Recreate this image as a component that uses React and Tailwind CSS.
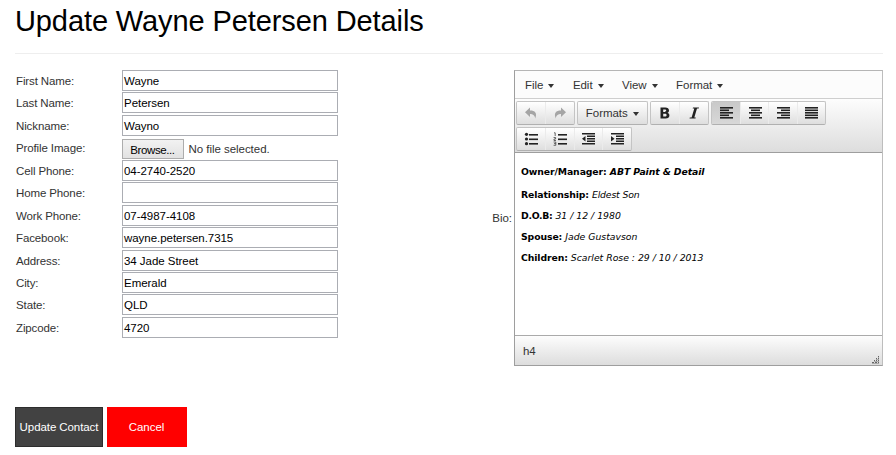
import React from "react";

const fields = [
  ["First Name:", "Wayne"],
  ["Last Name:", "Petersen"],
  ["Nickname:", "Wayno"],
  ["Profile Image:", null],
  ["Cell Phone:", "04-2740-2520"],
  ["Home Phone:", ""],
  ["Work Phone:", "07-4987-4108"],
  ["Facebook:", "wayne.petersen.7315"],
  ["Address:", "34 Jade Street"],
  ["City:", "Emerald"],
  ["State:", "QLD"],
  ["Zipcode:", "4720"],
];

function Field({ label, value }) {
  return (
    <div className="flex h-[22.45px] items-start">
      <div className="w-[106.500px] pl-px leading-[22px] tracking-[-0.12px] text-[#333]">{label}</div>
      {value === null ? (
        <div className="flex items-center pt-px">
          <button className="h-[20px] w-[62px] border border-[#adadad] bg-linear-to-b from-[#f2f2f2] to-[#e2e2e2] text-black leading-[20px] tracking-[-0.4px]">
            Browse...
          </button>
          <span className="ml-[5px] leading-[22px] text-[#333]">No file selected.</span>
        </div>
      ) : (
        <div className="h-[21px] w-[216.500px] whitespace-nowrap border border-[#abadb3] bg-white pl-[1.500px] leading-[21px] text-black">
          {value}
        </div>
      )}
    </div>
  );
}

function Caret() {
  return <span className="h-0 w-0 border-x-[3.500px] border-t-[4px] border-x-transparent border-t-[#333]" />;
}

function Group({ children }) {
  return (
    <div className="flex h-[24px] overflow-hidden rounded-[2px] border border-[#c4c4c4] border-b-[#b0b0b0] bg-linear-to-b from-white to-[#dedede]">
      {children}
    </div>
  );
}

function Tool({ children, active, first }) {
  return (
    <div
      className={
        "flex w-[28.400px] items-center justify-center " +
        (active ? "bg-linear-to-b from-[#c9c9c9] to-[#d8d8d8]" : first ? "" : "border-l border-[#ebebeb]")
      }
    >
      <svg width="14" height="14" viewBox="0 0 14 14" fill="none">
        {children}
      </svg>
    </div>
  );
}

function Lines({ rows }) {
  return rows.map(([x, w], i) => (
    <rect key={i} x={x} y={1 + i * 2.5} width={w} height="1.6" fill="#222" />
  ));
}

function ListLines() {
  return [2, 6.5, 11].map((y) => <rect key={y} x="5" y={y} width="9" height="1.6" fill="#222" />);
}

function IndentLines() {
  return (
    <path d="M1 1h13v1.600H1zM6 3.500h8v1.600H6zM6 6h8v1.600H6zM6 8.500h8v1.600H6zM1 11h13v1.600H1z" fill="#222" />
  );
}

export default function App() {
  return (
    <div className="h-[455px] w-[896px] overflow-hidden bg-white pl-[15px] pr-[13px] font-['Liberation_Sans',Arial,sans-serif] text-[11.5px] tracking-[-0.04px]">
      <h1 className="h-[53px] whitespace-nowrap pt-[3px] text-[29px] leading-[36px] tracking-[-0.1px] text-black">
        Update Wayne Petersen Details
      </h1>
      <div className="h-px bg-[#eee]" />
      <div className="mt-[16px] flex h-[296px] justify-between">
        <div>
          {fields.map(([label, value]) => (
            <Field key={label} label={label} value={value} />
          ))}
        </div>
        <div className="flex items-center">
          <div className="mr-[2px] pt-[2px] text-[#333]">Bio:</div>
          <div className="flex h-[296px] w-[369px] flex-col border border-[#9e9e9e] border-r-[#bdbdbd] border-t-[#b5b5b5] text-[#333]">
            <div className="flex h-[28px] items-center gap-[18.500px] border-b border-[#cfcfcf] bg-[#fcfcfc] pl-[10px] pt-[2px]">
              {["File", "Edit", "View", "Format"].map((m) => (
                <div key={m} className="flex items-center gap-[5px]">
                  {m}
                  <Caret />
                </div>
              ))}
            </div>
            <div className="h-[54px] border-b border-[#9e9e9e] bg-linear-to-b from-[#fdfdfd] to-[#dddddd] pl-[1px] pt-[2px]">
              <div className="flex gap-[2px]">
                <Group>
                  <Tool first>
                    <path d="M6 1.500v3c5 0 7.500 2.500 5.200 8C10.800 9 8.500 8.100 6 8.100V11L1 6.300z" fill="#a5a5a5" />
                  </Tool>
                  <Tool>
                    <path d="M8 1.500v3C3 4.500.5 7 2.800 12.500 3.200 9 5.500 8.100 8 8.100V11l5-4.700z" fill="#a5a5a5" />
                  </Tool>
                </Group>
                <Group>
                  <div className="flex w-[69px] items-center justify-center gap-[5px] pt-px">
                    Formats
                    <Caret />
                  </div>
                </Group>
                <Group>
                  <Tool first>
                    <path d="M2.500 1.500h4.800c2.300 0 3.700 1.100 3.700 2.900 0 1.200-.6 2-1.500 2.400 1.200.4 1.900 1.300 1.900 2.700 0 2-1.400 3-3.900 3h-5zM5.200 3.400v2.500h1.500c1 0 1.500-.4 1.500-1.200 0-.9-.5-1.300-1.500-1.300zM5.200 7.800v2.800h1.700c1.100 0 1.700-.5 1.700-1.400s-.6-1.400-1.700-1.400z" fill="#222" fillRule="evenodd" />
                  </Tool>
                  <Tool>
                    <path d="M6 1.500h6l-.3 1H10L7.300 11.500h1.500l-.3 1h-6l.3-1h1.800L7.300 2.500H5.700z" fill="#222" />
                  </Tool>
                </Group>
                <Group>
                  <Tool first active><Lines rows={[[1, 13], [1, 9], [1, 13], [1, 9], [1, 13]]} /></Tool>
                  <Tool><Lines rows={[[1, 13], [3, 9], [1, 13], [3, 9], [1, 13]]} /></Tool>
                  <Tool><Lines rows={[[1, 13], [5, 9], [1, 13], [5, 9], [1, 13]]} /></Tool>
                  <Tool><Lines rows={[[1, 13], [1, 13], [1, 13], [1, 13], [1, 13]]} /></Tool>
                </Group>
              </div>
              <div className="mt-[2px] flex">
                <Group>
                  <Tool first>
                    {[2.3, 7, 11.7].map((y) => <circle key={y} cx="2.500" cy={y} r="1.6" fill="#222" />)}
                    <ListLines />
                  </Tool>
                  <Tool>
                    <path d="M1 .8h1.200V4M.6 5.500h2V7h-1.600v1.500h2M.6 10h2.200v3.300H.6M1 11.600h1.800" stroke="#444" strokeWidth=".8" />
                    <ListLines />
                  </Tool>
                  <Tool>
                    <IndentLines />
                    <path d="M4.500 4v5.600L1 6.800z" fill="#222" />
                  </Tool>
                  <Tool>
                    <IndentLines />
                    <path d="M1 4v5.600l3.500-2.800z" fill="#222" />
                  </Tool>
                </Group>
              </div>
            </div>
            <div className="flex-1 whitespace-nowrap bg-white pl-[6px] pt-[8px] font-['DejaVu_Sans',Verdana,sans-serif] text-[9.3px] leading-[21px] tracking-[0px] text-black">
              <div className="h-[23px] font-bold tracking-[-0.1px]">Owner/Manager: <i>ABT Paint &amp; Detail</i></div>
              <div><b className="tracking-[-0.1px]">Relationship:</b> <i className="tracking-[-0.15px]">Eldest Son</i></div>
              <div><b className="tracking-[-0.3px]">D.O.B:</b> <i>31 / 12 / 1980</i></div>
              <div><b className="tracking-[-0.1px]">Spouse:</b> <i>Jade Gustavson</i></div>
              <div><b className="tracking-[-0.1px]">Children:</b> <i>Scarlet Rose : 29 / 10 / 2013</i></div>
            </div>
            <div className="flex h-[30px] items-end justify-between border-t border-[#aaa] bg-linear-to-b from-[#fdfdfd] to-[#dddddd] pl-[8px]">
              <span className="leading-[28px]">h4</span>
              <svg className="mb-[1px] mr-[2px]" width="9" height="9" viewBox="0 0 9 9" shapeRendering="crispEdges">
                <path d="M7 1h1v1H7zM5 3h1v1H5zM7 3h1v1H7zM3 5h1v1H3zM5 5h1v1H5zM7 5h1v1H7zM1 7h2v1H1zM4 7h2v1H4zM7 7h1v1H7z" fill="#666" />
                <path d="M7 2h1v1H7zM5 4h3v1H5zM3 6h5v1H3zM1 8h7v1H1z" fill="#aaa" />
              </svg>
            </div>
          </div>
        </div>
      </div>
      <div className="mt-[41px] flex gap-[3.500px] text-white">
        <button className="h-[40px] w-[88px] whitespace-nowrap border border-[#2d2d2d] bg-[#424242] pt-px tracking-[-0.08px]">Update Contact</button>
        <button className="h-[40px] w-[80px] bg-[#ff0000] pt-px">Cancel</button>
      </div>
    </div>
  );
}
